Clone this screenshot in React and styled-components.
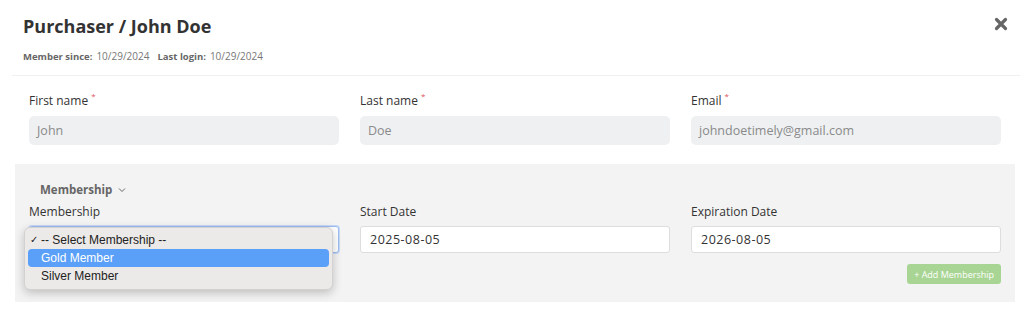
import React from 'react';
import styled, { createGlobalStyle } from 'styled-components';

const GlobalStyle = createGlobalStyle`
    * { box-sizing: border-box; }
    body {
        margin: 0;
        background: #ffffff;
        font-family: 'Open Sans', 'DejaVu Sans', sans-serif;
        color: #333333;
    }
`;

const Modal = styled.div`
    width: 1024px;
    height: 314px;
    overflow: hidden;
    position: relative;
`;

const Header = styled.div`
    display: flex;
    justify-content: space-between;
    align-items: flex-start;
    padding: 13px 16px 0 23px;
`;

const Title = styled.h2`
    margin: 0;
    font-size: 18px;
    line-height: 26px;
    font-weight: 700;
    color: #333333;
`;

const Meta = styled.div`
    display: flex;
    gap: 8px;
    margin-top: 11px;
    font-size: 10px;
    line-height: 12px;
    color: #777777;
`;

const MetaItem = styled.span`
    b {
        font-weight: 700;
        font-size: 9.5px;
        color: #666666;
        margin-right: 4px;
    }
`;

const CloseButton = styled.button`
    border: none;
    background: none;
    padding: 0;
    margin-top: 4px;
    width: 14px;
    height: 14px;
    cursor: pointer;
    display: flex;
`;

const Divider = styled.hr`
    margin: 12px 4px 0 12px;
    border: none;
    border-top: 1px solid #f0f0f0;
`;

const FieldRow = styled.div`
    display: grid;
    grid-template-columns: repeat(3, 310px);
    gap: 21px;
    padding: 0 29px;
    margin-top: ${props => props.top || 0}px;
`;

const Field = styled.div`
    display: flex;
    flex-direction: column;
    position: relative;
`;

const Label = styled.label`
    font-size: 12px;
    line-height: 16px;
    color: #333333;
    margin-bottom: ${props => (props.tight ? 6 : 7)}px;
    sup {
        color: #e0525b;
        font-size: 8px;
        margin-left: 3px;
        vertical-align: 6px;
        line-height: 0;
    }
`;

const ReadInput = styled.div`
    height: 29px;
    border-radius: 5px;
    background: #eef0f2;
    padding: 0 8px;
    display: flex;
    align-items: center;
    font-size: 12.5px;
    color: #8a8a8a;
`;

const MembershipPanel = styled.section`
    margin: 19px 9px 0 15px;
    background: #f3f3f3;
    padding: 19px 0 18px;
`;

const PanelTitle = styled.div`
    display: flex;
    align-items: center;
    gap: 5px;
    padding-left: 25px;
    font-size: 11.5px;
    line-height: 14px;
    font-weight: 700;
    color: #666666;
    margin-bottom: 7px;
`;

const PanelRow = styled(FieldRow)`
    padding: 0 14px;
`;

const DateInput = styled.div`
    height: 27px;
    border-radius: 3px;
    background: #ffffff;
    border: 1px solid #dddddd;
    padding: 0 9px;
    display: flex;
    align-items: center;
    font-size: 12.5px;
    letter-spacing: 0.5px;
    color: #333333;
`;

const SelectBox = styled(DateInput)`
    border: 1px solid #9dbdf0;
    box-shadow: 0 0 0 1px #c6d9f7;
    justify-content: flex-end;
    padding-right: 5px;
`;

const Dropdown = styled.ul`
    position: absolute;
    left: -5px;
    top: 23px;
    width: 309px;
    margin: 0;
    padding: 3px 3px 4px;
    list-style: none;
    background: #ece9e9;
    border-radius: 6px;
    border: 1px solid #d4d1d1;
    box-shadow: 0 3px 10px rgba(0, 0, 0, 0.22);
    font-family: 'Liberation Sans', Arial, sans-serif;
    font-size: 12px;
    z-index: 5;
`;

const Option = styled.li`
    height: 18px;
    line-height: 18px;
    padding-left: 13px;
    border-radius: 4px;
    position: relative;
    color: ${props => (props.active ? '#ffffff' : '#222222')};
    background: ${props => (props.active ? '#5a9ff8' : 'transparent')};
`;

const Check = styled.span`
    position: absolute;
    left: 2px;
    font-size: 10px;
`;

const Actions = styled.div`
    display: flex;
    justify-content: flex-end;
    padding: 0 14px;
    margin-top: 11px;
`;

const AddButton = styled.button`
    height: 20px;
    padding: 0 7px;
    border: none;
    border-radius: 3px;
    background: #a9d594;
    color: #ffffff;
    font-family: inherit;
    font-size: 9px;
    cursor: pointer;
`;

const Chevron = ({ size = 8 }) => (
    <svg width={size} height={size} viewBox="0 0 10 10">
        <path d="M2 3.5 L5 6.5 L8 3.5" fill="none" stroke="#666" strokeWidth="1" />
    </svg>
);

function App() {
    const user = [
        { label: 'First name', value: 'John' },
        { label: 'Last name', value: 'Doe' },
        { label: 'Email', value: 'johndoetimely@gmail.com' }
    ];

    return (
        <Modal>
            <GlobalStyle />
            <Header>
                <div>
                    <Title>Purchaser / John Doe</Title>
                    <Meta>
                        <MetaItem><b>Member since:</b>10/29/2024</MetaItem>
                        <MetaItem><b>Last login:</b>10/29/2024</MetaItem>
                    </Meta>
                </div>
                <CloseButton aria-label="Close">
                    <svg width="14" height="14" viewBox="0 0 14 14">
                        <path d="M2.5 2.5 L11.5 11.5 M11.5 2.5 L2.5 11.5" stroke="#666" strokeWidth="3.2" strokeLinecap="round" />
                    </svg>
                </CloseButton>
            </Header>
            <Divider />
            <FieldRow top={17}>
                {user.map(f => (
                    <Field key={f.label}>
                        <Label>{f.label}<sup>*</sup></Label>
                        <ReadInput>{f.value}</ReadInput>
                    </Field>
                ))}
            </FieldRow>
            <MembershipPanel>
                <PanelTitle>Membership <Chevron size={10} /></PanelTitle>
                <PanelRow>
                    <Field>
                        <Label tight>Membership</Label>
                        <SelectBox><Chevron /></SelectBox>
                        <Dropdown>
                            <Option><Check>✓</Check>-- Select Membership --</Option>
                            <Option active>Gold Member</Option>
                            <Option>Silver Member</Option>
                        </Dropdown>
                    </Field>
                    <Field>
                        <Label tight>Start Date</Label>
                        <DateInput>2025-08-05</DateInput>
                    </Field>
                    <Field>
                        <Label tight>Expiration Date</Label>
                        <DateInput>2026-08-05</DateInput>
                    </Field>
                </PanelRow>
                <Actions>
                    <AddButton>+ Add Membership</AddButton>
                </Actions>
            </MembershipPanel>
        </Modal>
    );
}

export default App;
